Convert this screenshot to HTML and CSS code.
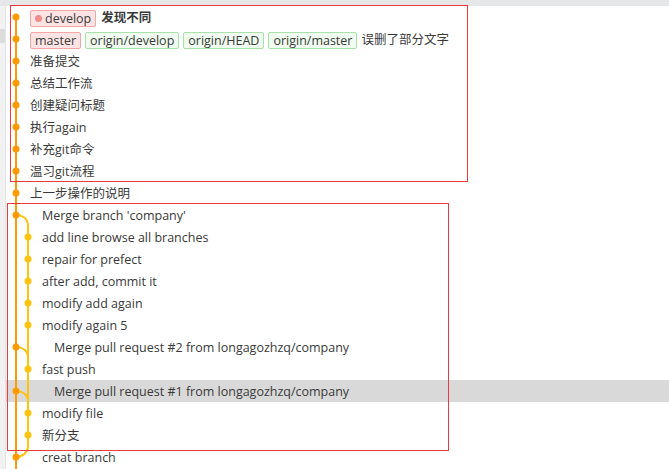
FILE: index.html
```html
<!DOCTYPE html>
<html lang="zh">
<head>
<meta charset="utf-8">
<title>Git log</title>
<link rel="stylesheet" href="styles.css">
</head>
<body>
<div class="app">
  <div class="topbar"></div>
  <div class="main">
    <div class="gutter"><div class="gutter-mark"></div></div>
    <div class="list">
      <div class="row ind1"><span class="badge local"><span class="dot"></span>develop</span><span class="msg bold">发现不同</span></div>
      <div class="row ind1"><span class="badge local">master</span><span class="badge remote">origin/develop</span><span class="badge remote">origin/HEAD</span><span class="badge remote">origin/master</span><span class="msg">误删了部分文字</span></div>
      <div class="row ind1"><span class="msg">准备提交</span></div>
      <div class="row ind1"><span class="msg">总结工作流</span></div>
      <div class="row ind1"><span class="msg">创建疑问标题</span></div>
      <div class="row ind1"><span class="msg">执行again</span></div>
      <div class="row ind1"><span class="msg">补充git命令</span></div>
      <div class="row ind1"><span class="msg">温习git流程</span></div>
      <div class="row ind1"><span class="msg">上一步操作的说明</span></div>
      <div class="row ind2"><span class="msg">Merge branch 'company'</span></div>
      <div class="row ind2"><span class="msg">add line browse all branches</span></div>
      <div class="row ind2"><span class="msg">repair for prefect</span></div>
      <div class="row ind2"><span class="msg">after add, commit it</span></div>
      <div class="row ind2"><span class="msg">modify add again</span></div>
      <div class="row ind2"><span class="msg">modify again 5</span></div>
      <div class="row ind3"><span class="msg">Merge pull request #2 from longagozhzq/company</span></div>
      <div class="row ind2"><span class="msg">fast push</span></div>
      <div class="row ind3 selected"><span class="msg">Merge pull request #1 from longagozhzq/company</span></div>
      <div class="row ind2"><span class="msg">modify file</span></div>
      <div class="row ind2"><span class="msg">新分支</span></div>
      <div class="row ind2"><span class="msg">creat branch</span></div>
    </div>
  </div>

  <svg class="graph" width="40" height="469" viewBox="0 0 40 469" xmlns="http://www.w3.org/2000/svg">
    <g fill="none" stroke="#ffc20e" stroke-width="2">
      <path d="M16 215 C22 215 28 218 28 226 V446 C28 453 22 457 16 457"/>
      <path d="M16 347 C22 347 28 350 28 358"/>
      <path d="M16 391 C22 391 28 394 28 402"/>
    </g>
    <path d="M16 17 V469" stroke="#ff9a00" stroke-width="2" fill="none"/>
    <g fill="#ff9a00">
      <circle cx="16" cy="17" r="3.5"/>
      <circle cx="16" cy="39" r="3.5"/>
      <circle cx="16" cy="61" r="3.5"/>
      <circle cx="16" cy="83" r="3.5"/>
      <circle cx="16" cy="105" r="3.5"/>
      <circle cx="16" cy="127" r="3.5"/>
      <circle cx="16" cy="149" r="3.5"/>
      <circle cx="16" cy="171" r="3.5"/>
      <circle cx="16" cy="193" r="3.5"/>
      <circle cx="16" cy="215" r="3.5"/>
      <circle cx="16" cy="347" r="3.5"/>
      <circle cx="16" cy="391" r="3.5"/>
      <circle cx="16" cy="457" r="3.5"/>
    </g>
    <g fill="#ffc20e">
      <circle cx="28" cy="237" r="3.5"/>
      <circle cx="28" cy="259" r="3.5"/>
      <circle cx="28" cy="281" r="3.5"/>
      <circle cx="28" cy="303" r="3.5"/>
      <circle cx="28" cy="325" r="3.5"/>
      <circle cx="28" cy="369" r="3.5"/>
      <circle cx="28" cy="413" r="3.5"/>
      <circle cx="28" cy="435" r="3.5"/>
    </g>
  </svg>

  <div class="annot annot-top"></div>
  <div class="annot annot-bottom"></div>
</div>
</body>
</html>
```

FILE: styles.css
```css
* { box-sizing: border-box; }
html, body { margin: 0; padding: 0; background: #fff; }
body {
  font-family: "Open Sans", "Noto Sans CJK SC", sans-serif;
  font-size: 12.5px;
  color: #3a3a3a;
}
.app {
  position: relative;
  width: 669px;
  height: 469px;
  overflow: hidden;
  background: #fff;
}
.topbar {
  height: 6px;
  background: #e6e7e9;
}
.main {
  display: flex;
  height: 463px;
}
.gutter {
  width: 6px;
  flex: none;
  background: #f2f2f2;
  border-right: 1px solid #e4e4e4;
  padding-top: 23px;
}
.gutter-mark {
  height: 14px;
  background: #dcdcdc;
}
.list {
  flex: 1;
  display: flex;
  flex-direction: column;
}
.row {
  height: 22px;
  flex: none;
  display: flex;
  align-items: center;
  gap: 4px;
  padding-top: 2px;
  white-space: nowrap;
}
.row.ind1 { padding-left: 24px; }
.row.ind2 { padding-left: 36px; }
.row.ind3 { padding-left: 48px; }
.row.selected { background: #d9d9d9; }
.msg { line-height: 16px; }
.bold { font-weight: bold; margin-left: 1px; }
.badge {
  display: inline-flex;
  align-items: center;
  height: 17px;
  padding: 0 4px;
  border: 1px solid;
  border-radius: 2px;
  line-height: 15px;
}
.badge.local {
  background: #fde4e4;
  border-color: #f3a7a7;
}
.badge.remote {
  background: #effcef;
  border-color: #a8e2a8;
}
.dot {
  width: 7px;
  height: 7px;
  border-radius: 50%;
  background: #f28b8b;
  margin-right: 3px;
}
.graph {
  position: absolute;
  left: 0;
  top: 0;
}
.annot {
  position: absolute;
  border: 1px solid #ee3a3a;
}
.annot-top {
  left: 10px;
  top: 5px;
  width: 458px;
  height: 177px;
}
.annot-bottom {
  left: 7px;
  top: 203px;
  width: 442px;
  height: 248px;
}
```
